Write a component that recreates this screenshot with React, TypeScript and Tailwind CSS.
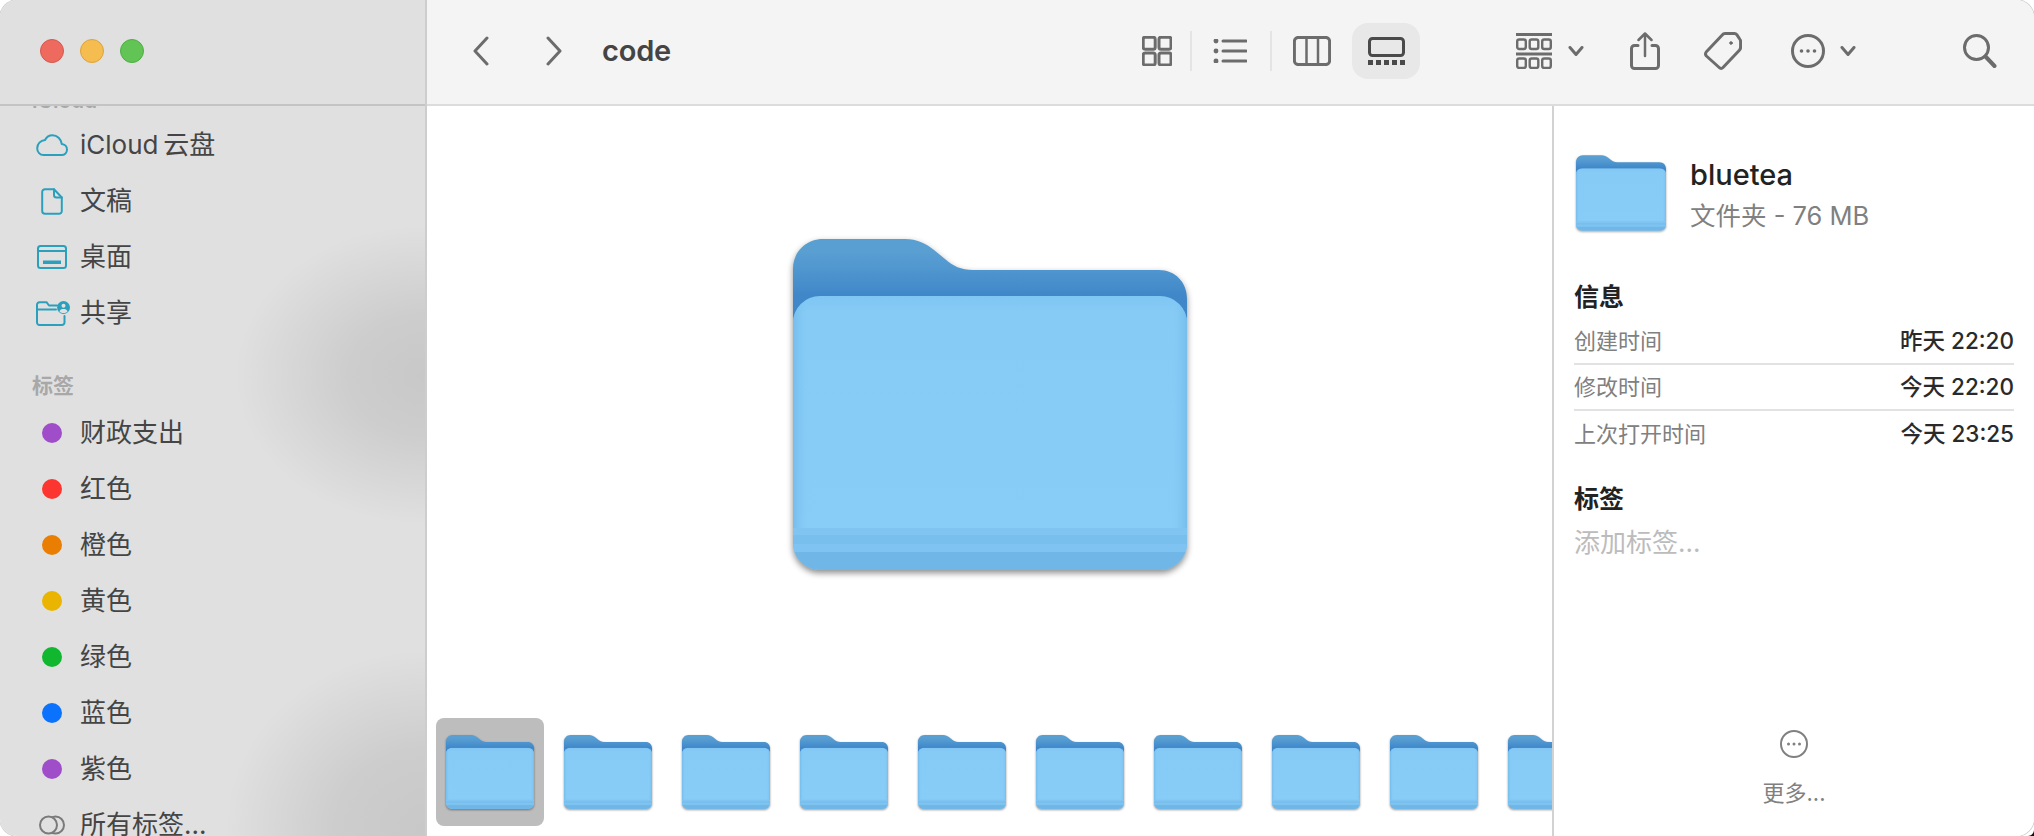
const cjk = "font-['Inter','Noto_Sans_CJK_SC',sans-serif]";

function Folder({ className }: { className: string }) {
  return (
    <svg viewBox="0 0 394 331" className={className}>
      <defs>
        <linearGradient id="fBack" x1="0" y1="0" x2="0" y2="1">
          <stop offset="0" stopColor="#5a9fd2" />
          <stop offset="0.1" stopColor="#5a9fd2" />
          <stop offset="0.25" stopColor="#5097d0" />
          <stop offset="0.47" stopColor="#3f87c8" />
          <stop offset="1" stopColor="#3f87c8" />
        </linearGradient>
        <linearGradient id="fSideX" x1="0" y1="0" x2="1" y2="0">
          <stop offset="0" stopColor="#76bdec" />
          <stop offset="0.04" stopColor="#86cbf6" stopOpacity="0" />
          <stop offset="0.96" stopColor="#86cbf6" stopOpacity="0" />
          <stop offset="1" stopColor="#76bdec" />
        </linearGradient>
        <linearGradient id="fFront" x1="0" y1="0" x2="0" y2="1">
          <stop offset="0" stopColor="#80c6f3" />
          <stop offset="0.06" stopColor="#86cbf6" />
          <stop offset="1" stopColor="#88cdf7" />
        </linearGradient>
        <clipPath id="fClip">
          <rect x="0" y="57" width="394" height="274" rx="27" />
        </clipPath>
      </defs>
      <path
        d="M0 30C0 13 13 0 30 0H112C124 0 132 4 141 11L152 20C160 27 168 31 180 31H366C382 31 394 43 394 60V120H0Z"
        fill="url(#fBack)"
      />
      <g clipPath="url(#fClip)">
        <rect x="0" y="57" width="394" height="274" fill="url(#fFront)" />
        <rect x="0" y="57" width="394" height="274" fill="url(#fSideX)" />
        <rect x="0" y="289" width="394" height="7" fill="#80c5f2" />
        <rect x="0" y="296" width="394" height="9" fill="#78bfee" />
        <rect x="0" y="305" width="394" height="8" fill="#7ec3f1" />
        <rect x="0" y="313" width="394" height="18" fill="#70b7e8" />
      </g>
    </svg>
  );
}

function Stroke({ w, h, children, className = "" }: { w: number; h: number; children: React.ReactNode; className?: string }) {
  return (
    <svg
      width={w}
      height={h}
      viewBox={`0 0 ${w} ${h}`}
      fill="none"
      stroke="currentColor"
      strokeWidth="2.5"
      strokeLinecap="round"
      strokeLinejoin="round"
      className={"shrink-0 " + className}
    >
      {children}
    </svg>
  );
}

function Chevron({ className }: { className: string }) {
  return (
    <Stroke w={16} h={10} className={className}>
      <path d="M2 1.5L8 8.5L14 1.5" strokeWidth="3" />
    </Stroke>
  );
}

function Sep({ className }: { className: string }) {
  return <div className={"w-[2px] h-[40px] bg-[#e4e4e4] shrink-0 " + className} />;
}

function Toolbar() {
  return (
    <div className="h-[106px] shrink-0 flex items-center bg-[#f4f4f4] border-b-2 border-[#dcdcdc] pb-[2px] pl-[46px] text-[#6c6c6c]">
      <Stroke w={16} h={30}><path d="M14 2L2 15L14 28" strokeWidth="3" /></Stroke>
      <Stroke w={16} h={30} className="ml-[57px]"><path d="M2 2L14 15L2 28" strokeWidth="3" /></Stroke>
      <span className={cjk + " ml-[40px] w-[70px] text-[29px] leading-[36px] font-semibold text-[#444444] tracking-[-0.2px]"}>code</span>

      <Stroke w={30} h={30} className="ml-[470px]">
        <rect x="1.2" y="1.2" width="12" height="12" rx="2" strokeWidth="3" />
        <rect x="17" y="1.2" width="12" height="12" rx="2" strokeWidth="3" />
        <rect x="1.2" y="17" width="12" height="12" rx="2" strokeWidth="3" />
        <rect x="17" y="17" width="12" height="12" rx="2" strokeWidth="3" />
      </Stroke>
      <Sep className="ml-[18px]" />
      <Stroke w={34} h={24} className="ml-[21px]">
        <circle cx="3" cy="2" r="1.2" fill="currentColor" />
        <circle cx="3" cy="12" r="1.2" fill="currentColor" />
        <circle cx="3" cy="22" r="1.2" fill="currentColor" />
        <path d="M10 2H33M10 12H33M10 22H33" strokeWidth="3" />
      </Stroke>
      <Sep className="ml-[23px]" />
      <Stroke w={38} h={30} className="ml-[21px]">
        <rect x="1.4" y="1.4" width="35.2" height="27.2" rx="4" strokeWidth="3" />
        <path d="M13.5 1.2V28.8M25 1.2V28.8" />
      </Stroke>
      <div className="ml-[21px] w-[68px] h-[56px] rounded-[16px] bg-[#e8e8e8] flex flex-col items-center justify-center shrink-0 text-[#4a4a4a]">
        <Stroke w={37} h={20}>
          <rect x="1.5" y="1.5" width="34" height="17" rx="3" strokeWidth="3" />
        </Stroke>
        <div className="flex gap-[3px] mt-[3px]">
          <div className="w-[5px] h-[5px] bg-[#4a4a4a]" />
          <div className="w-[5px] h-[5px] bg-[#4a4a4a]" />
          <div className="w-[5px] h-[5px] bg-[#4a4a4a]" />
          <div className="w-[5px] h-[5px] bg-[#4a4a4a]" />
          <div className="w-[5px] h-[5px] bg-[#4a4a4a]" />
        </div>
      </div>

      <Stroke w={36} h={36} className="ml-[96px]">
        <path d="M0.5 1.5H35.5M0.5 21H35.5" strokeWidth="3" />
        <g strokeWidth="2.4">
          <rect x="1.2" y="6.5" width="8.6" height="9.5" rx="2" />
          <rect x="13.7" y="6.5" width="8.6" height="9.5" rx="2" />
          <rect x="26.2" y="6.5" width="8.6" height="9.5" rx="2" />
          <rect x="1.2" y="25.5" width="8.6" height="9.5" rx="2" />
          <rect x="13.7" y="25.5" width="8.6" height="9.5" rx="2" />
          <rect x="26.2" y="25.5" width="8.6" height="9.5" rx="2" />
        </g>
      </Stroke>
      <Chevron className="ml-[16px]" />
      <Stroke w={30} h={38} className="ml-[46px]">
        <path d="M8 13.5H4.5A3 3 0 0 0 1.5 16.5V33.5A3 3 0 0 0 4.5 36.5H25.5A3 3 0 0 0 28.5 33.5V16.5A3 3 0 0 0 25.5 13.5H22" strokeWidth="3" />
        <path d="M15 24V1.5M8.5 8L15 1.5L21.5 8" />
      </Stroke>
      <Stroke w={38} h={38} className="ml-[44px]">
        <path d="M21 1.5H30.5C31.5 1.5 32.2 1.9 32.8 2.7L36 7.5C36.5 8.2 36.6 8.8 36.6 9.6V15C36.6 16.2 36.3 17 35.6 18L19 35.5C17.8 36.8 16.4 36.8 15.2 35.5L2.4 24C1.2 22.6 1.2 21.4 2.2 20L18 3.2C19 2 19.8 1.5 21 1.5Z" strokeWidth="3" />
        <circle cx="27" cy="11" r="1.3" fill="currentColor" strokeWidth="1" />
      </Stroke>
      <Stroke w={34} h={34} className="ml-[49px]">
        <circle cx="17" cy="17" r="15.5" strokeWidth="3" />
        <circle cx="10.5" cy="17" r="1.8" fill="currentColor" stroke="none" />
        <circle cx="17" cy="17" r="1.8" fill="currentColor" stroke="none" />
        <circle cx="23.5" cy="17" r="1.8" fill="currentColor" stroke="none" />
      </Stroke>
      <Chevron className="ml-[15px]" />
      <Stroke w={34} h={34} className="ml-[107px]">
        <circle cx="13.5" cy="13.5" r="12" strokeWidth="3" />
        <path d="M22.5 22.5L31.5 32" strokeWidth="4" />
      </Stroke>
    </div>
  );
}

const teal = "text-[#2aa0bd]";

function Row({ icon, label }: { icon: React.ReactNode; label: string }) {
  return (
    <div className="h-[56px] shrink-0 flex items-center">
      <div className="w-[40px] ml-[32px] flex justify-center items-center shrink-0">{icon}</div>
      <span className="ml-[8px] text-[26px] leading-[36px] text-[#454545] whitespace-nowrap">{label}</span>
    </div>
  );
}

function Dot({ c }: { c: string }) {
  return <div className={"w-[20px] h-[20px] rounded-full " + c} />;
}

function Sidebar() {
  return (
    <div className={cjk + " relative w-[427px] shrink-0 h-full flex flex-col bg-[#e0e0e0] border-r-2 border-[#cdcdcd] overflow-hidden"}>
      <div className="absolute left-[235px] top-[225px] w-[380px] h-[300px] bg-[radial-gradient(closest-side,#c8c8c8_0%,#cdcdcd_40%,#e0e0e000_100%)]" />
      <div className="absolute left-[225px] top-[650px] w-[400px] h-[360px] bg-[radial-gradient(closest-side,#c8c8c8_0%,#cdcdcd_45%,#e0e0e000_100%)]" />
      <div className="relative h-[106px] shrink-0 bg-[#e0e0e0] border-b-2 border-[#c4c4c4] flex items-center pb-[2px] pl-[40px] gap-[16px] z-10">
        <div className="w-[24px] h-[24px] rounded-full bg-[#ee6a5f] border border-[#d5574d]" />
        <div className="w-[24px] h-[24px] rounded-full bg-[#f5bd4f] border border-[#dca33a]" />
        <div className="w-[24px] h-[24px] rounded-full bg-[#61c454] border border-[#4fae44]" />
      </div>
      <div className="relative flex-1 min-h-0 flex flex-col">
        <div className="h-[40px] mt-[-29px] shrink-0 pl-[32px] flex items-end pb-[4px] text-[21px] leading-[24px] font-semibold text-[#a8a8a8]">iCloud</div>
        <Row
          label={"iCloud\u2009云盘"}
          icon={
            <Stroke w={32} h={22} className={teal}>
              <path d="M7.5 21H25.5C28.8 21 31 18.6 31 15.6C31 12.6 28.8 10.3 25.8 10C25 5 21.3 1.2 16.5 1.2C13 1.2 10.5 3 9 6C4.5 6.4 1.2 9.8 1.2 14.2C1.2 18.2 4 21 7.5 21Z" strokeWidth="2" />
            </Stroke>
          }
        />
        <Row
          label="文稿"
          icon={
            <Stroke w={22} h={27} className={teal}>
              <path d="M4 1.2H13L20.8 9.5V23A2.8 2.8 0 0 1 18 25.8H4A2.8 2.8 0 0 1 1.2 23V4A2.8 2.8 0 0 1 4 1.2Z" strokeWidth="2" />
              <path d="M13 1.2V7A2.5 2.5 0 0 0 15.5 9.5H20.8" strokeWidth="2" />
            </Stroke>
          }
        />
        <Row
          label="桌面"
          icon={
            <Stroke w={30} h={24} className={teal}>
              <rect x="1" y="1" width="28" height="22" rx="2.5" strokeWidth="2" />
              <path d="M1 6H29" strokeWidth="2" />
              <rect x="6" y="15.5" width="18" height="3.5" fill="currentColor" stroke="none" />
            </Stroke>
          }
        />
        <Row
          label="共享"
          icon={
            <Stroke w={34} h={25} className={teal + " ml-[2px]"}>
              <path d="M21 4.5H13L10.5 1.2H3.5A2.5 2.5 0 0 0 1 3.7V21.5A2.5 2.5 0 0 0 3.5 24H26A2.5 2.5 0 0 0 28.5 21.5V15" strokeWidth="2" />
              <path d="M1 8.5H20" strokeWidth="2" />
              <circle cx="27.5" cy="6.5" r="6.5" fill="currentColor" stroke="none" />
              <circle cx="27.5" cy="4.8" r="2" fill="#e0e0e0" stroke="none" />
              <path d="M23.5 10.5C24 8.6 25.6 8 27.5 8C29.4 8 31 8.6 31.5 10.5C30.4 11.6 29 12 27.5 12C26 12 24.6 11.6 23.5 10.5Z" fill="#e0e0e0" stroke="none" />
            </Stroke>
          }
        />
        <div className="h-[64px] shrink-0 pl-[32px] pb-[7px] flex items-end text-[21px] leading-[24px] font-semibold text-[#a8a8a8]">标签</div>
        <Row label="财政支出" icon={<Dot c="bg-[#a04dca]" />} />
        <Row label="红色" icon={<Dot c="bg-[#fc3530]" />} />
        <Row label="橙色" icon={<Dot c="bg-[#e97e02]" />} />
        <Row label="黄色" icon={<Dot c="bg-[#e9b500]" />} />
        <Row label="绿色" icon={<Dot c="bg-[#10b72f]" />} />
        <Row label="蓝色" icon={<Dot c="bg-[#0a72fc]" />} />
        <Row label="紫色" icon={<Dot c="bg-[#a04dca]" />} />
        <Row
          label="所有标签..."
          icon={
            <div className="relative w-[26px] h-[20px] text-[#7a7a7a]">
              <Stroke w={26} h={20}>
                <circle cx="16.5" cy="10" r="8.5" strokeWidth="2" />
                <circle cx="9.5" cy="10" r="8.5" strokeWidth="2" fill="#e0e0e0" />
              </Stroke>
            </div>
          }
        />
      </div>
    </div>
  );
}

function Gallery() {
  const items = [1, 2, 3, 4, 5, 6, 7, 8, 9, 10];
  return (
    <div className="flex-1 min-w-0 flex flex-col bg-white overflow-hidden">
      <div className="flex-1 min-h-0 pt-[133px] flex justify-center">
        <Folder className="w-[394px] h-[331px] shrink-0 drop-shadow-[0_3px_3px_rgba(0,0,0,0.45)]" />
      </div>
      <div className="shrink-0 pb-[10px] pl-[9px] flex gap-[10px]">
        {items.map((i) => (
          <div
            key={i}
            className={"w-[108px] h-[108px] shrink-0 rounded-[8px] flex items-center justify-center " + (i === 1 ? "bg-[#bdbdbd]" : "")}
          >
            <Folder className="w-[88px] h-[74px] drop-shadow-[0_1px_1px_rgba(0,0,0,0.4)]" />
          </div>
        ))}
      </div>
    </div>
  );
}

function InfoRow({ k, v, line }: { k: string; v: string; line?: boolean }) {
  return (
    <div className={"h-[46px] flex items-center justify-between text-[22px] leading-[30px] " + (line ? "border-b-2 border-[#e2e2e2]" : "")}>
      <span className="text-[#808080]">{k}</span>
      <span className="text-[#2a2a2a] font-medium text-[22.5px]">{v}</span>
    </div>
  );
}

function Inspector() {
  return (
    <div className={cjk + " w-[482px] shrink-0 h-full flex flex-col bg-white border-l-2 border-[#d2d2d2] pt-[49px] pl-[20px] pr-[20px]"}>
      <div className="h-[80px] flex shrink-0">
        <Folder className="w-[90px] h-[76px] ml-[2px] shrink-0 drop-shadow-[0_1px_1px_rgba(0,0,0,0.35)]" />
        <div className="ml-[24px] flex flex-col">
          <span className="h-[40px] text-[29px] leading-[40px] font-medium text-[#222222]">bluetea</span>
          <span className="h-[40px] mt-[1px] text-[25.5px] leading-[40px] text-[#808080]">文件夹 - 76 MB</span>
        </div>
      </div>
      <div className="mt-[44px] h-[36px] text-[25px] leading-[36px] font-semibold text-[#222222]">信息</div>
      <div className="mt-[4px] flex flex-col">
        <InfoRow k="创建时间" v="昨天 22:20" line />
        <InfoRow k="修改时间" v="今天 22:20" line />
        <InfoRow k="上次打开时间" v="今天 23:25" />
      </div>
      <div className="mt-[24px] h-[36px] text-[25px] leading-[36px] font-semibold text-[#222222]">标签</div>
      <div className="mt-[8px] h-[36px] text-[26px] leading-[36px] text-[#bcbcbc]">添加标签...</div>
      <div className="mt-auto pb-[28px] flex flex-col items-center text-[#808080]">
        <Stroke w={28} h={28}>
          <circle cx="14" cy="14" r="13" strokeWidth="2" />
          <circle cx="8.5" cy="14" r="1.5" fill="currentColor" stroke="none" />
          <circle cx="14" cy="14" r="1.5" fill="currentColor" stroke="none" />
          <circle cx="19.5" cy="14" r="1.5" fill="currentColor" stroke="none" />
        </Stroke>
        <span className="mt-[20px] h-[30px] text-[22px] leading-[30px]">更多...</span>
      </div>
    </div>
  );
}

export default function App() {
  return (
    <div className="relative w-[2034px] h-[836px] bg-white overflow-hidden">
      <div className="w-full h-full flex rounded-[18px] overflow-hidden shadow-[0_0_0_1px_#d0d0d0]">
        <Sidebar />
        <div className="flex-1 min-w-0 h-full flex flex-col">
          <Toolbar />
          <div className="flex-1 min-h-0 flex">
            <Gallery />
            <Inspector />
          </div>
        </div>
      </div>
      <svg width="6" height="6" viewBox="0 0 6 6" className="absolute right-0 bottom-0">
        <path d="M6 0V6H0C3 6 6 3 6 0Z" fill="#111111" />
      </svg>
    </div>
  );
}
